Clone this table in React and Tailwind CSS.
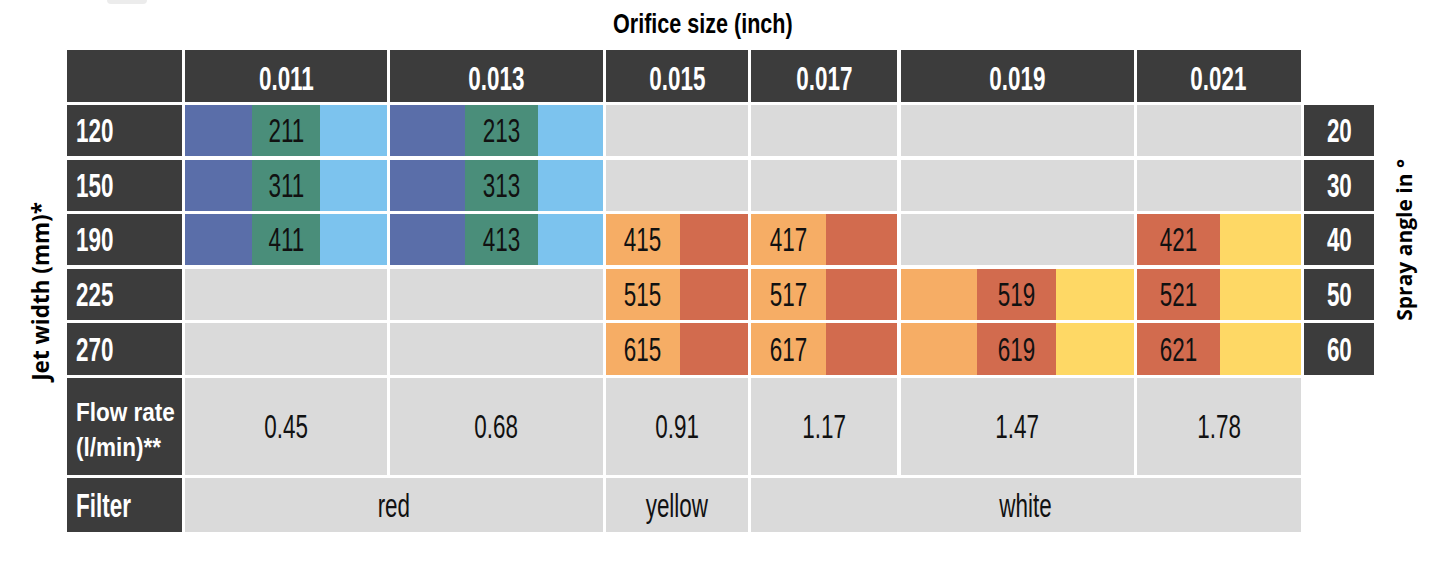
import React from 'react';

const dark = 'bg-[#3c3c3c]';
const gray = 'bg-[#dadada]';

// condensed look: Liberation Sans squeezed horizontally
const T = ({ children, left = false, className = '' }) => (
    <span className={`inline-block whitespace-nowrap scale-x-[0.68] ${left ? 'origin-left' : ''} ${className}`}>{children}</span>
);

const Seg = ({ color, w, children }) => (
    <div className={`${color} ${w || 'flex-1'} h-full flex items-center justify-center`}>
        {children && <T>{children}</T>}
    </div>
);

const Blank = () => <div className={`${gray} h-full`} />;

const BlueSet = ({ code, widths = ['flex-1', 'flex-1'] }) => (
    <div className="flex h-full">
        <Seg color="bg-[#5a6ea9]" w={widths[0]} />
        <Seg color="bg-[#4a8e7a]" w={widths[1]}>{code}</Seg>
        <Seg color="bg-[#7cc3ee]" />
    </div>
);

const OrangeRed = ({ code, w }) => (
    <div className="flex h-full">
        <Seg color="bg-[#f6ad65]" w={w}>{code}</Seg>
        <Seg color="bg-[#d26b4e]" />
    </div>
);

const OrangeRedYellow = ({ code }) => (
    <div className="flex h-full">
        <Seg color="bg-[#f6ad65]" w="w-[76px]" />
        <Seg color="bg-[#d26b4e]" w="w-[79px]">{code}</Seg>
        <Seg color="bg-[#fed865]" />
    </div>
);

const RedYellow = ({ code }) => (
    <div className="flex h-full">
        <Seg color="bg-[#d26b4e]" w="w-[83px]">{code}</Seg>
        <Seg color="bg-[#fed865]" />
    </div>
);

const RowHead = ({ children }) => (
    <div className={`${dark} h-full flex items-center pl-[9px] font-bold text-white`}>
        <T left>{children}</T>
    </div>
);

const Angle = ({ children }) => (
    <div className={`${dark} h-full flex items-center justify-center font-bold text-white`}>
        <T>{children}</T>
    </div>
);

const GrayCell = ({ children, className = '' }) => (
    <div className={`${gray} h-full flex items-center justify-center ${className}`}>
        <T>{children}</T>
    </div>
);

const sizes = ['0.011', '0.013', '0.015', '0.017', '0.019', '0.021'];
const c2w = ['w-[75px]', 'w-[73px]'];

const rows = [
    { width: '120', angle: '20', cells: [<BlueSet code="211" />, <BlueSet code="213" widths={c2w} />, <Blank />, <Blank />, <Blank />, <Blank />] },
    { width: '150', angle: '30', cells: [<BlueSet code="311" />, <BlueSet code="313" widths={c2w} />, <Blank />, <Blank />, <Blank />, <Blank />] },
    { width: '190', angle: '40', cells: [<BlueSet code="411" />, <BlueSet code="413" widths={c2w} />, <OrangeRed code="415" w="w-[74px]" />, <OrangeRed code="417" w="w-[75px]" />, <Blank />, <RedYellow code="421" />] },
    { width: '225', angle: '50', cells: [<Blank />, <Blank />, <OrangeRed code="515" w="w-[74px]" />, <OrangeRed code="517" w="w-[75px]" />, <OrangeRedYellow code="519" />, <RedYellow code="521" />] },
    { width: '270', angle: '60', cells: [<Blank />, <Blank />, <OrangeRed code="615" w="w-[74px]" />, <OrangeRed code="617" w="w-[75px]" />, <OrangeRedYellow code="619" />, <RedYellow code="621" />] },
];

const flow = ['0.45', '0.68', '0.91', '1.17', '1.47', '1.78'];

export default function App() {
    return (
        <div className="w-[1441px] h-[574px] bg-white overflow-hidden text-[#111] font-['Liberation_Sans',Arial,sans-serif] text-[33px] leading-none">
            {/* cut-off mark at the top edge */}
            <div className="h-[4px] flex">
                <div className="ml-[107px] w-[40px] h-[4px] rounded-b-full bg-[#ececec]" />
            </div>

            <div className="h-[46px] pt-[5.6px] pl-[613px]">
                <h1 className="text-[28px] leading-[28px] font-bold text-black">
                    <span className="inline-block whitespace-nowrap scale-x-[0.77] origin-left">Orifice size (inch)</span>
                </h1>
            </div>

            <div className="grid grid-cols-[63.7px_115px_201.4px_212.7px_141.7px_146.4px_233px_163.7px_70px_1fr] grid-rows-[51.7px_repeat(5,51.3px)_97.2px_53.5px] gap-[3.3px]">
                {/* left axis label */}
                <div className="col-start-1 row-start-1 row-span-8 flex items-center">
                    <span className="ml-[28.5px] [writing-mode:vertical-rl] rotate-180 font-['Open_Sans',sans-serif] font-bold text-[22.5px] leading-[24px] text-black whitespace-nowrap">
                        Jet width (mm)*
                    </span>
                </div>

                {/* right axis label */}
                <div className="col-start-10 row-start-2 row-span-5 flex items-center">
                    <span className="ml-[14.7px] [writing-mode:vertical-rl] rotate-180 font-['Open_Sans',sans-serif] font-bold text-[21px] leading-[24px] text-black whitespace-nowrap">
                        Spray angle in °
                    </span>
                </div>

                {/* header */}
                <div className={`${dark} h-full`} />
                {sizes.map((s) => (
                    <div key={s} className={`${dark} h-full flex items-center justify-center pt-[5px] font-bold text-white`}>
                        <T>{s}</T>
                    </div>
                ))}
                <div />
                <div />

                {rows.map((r) => (
                    <React.Fragment key={r.width}>
                        <RowHead>{r.width}</RowHead>
                        {r.cells.map((c, i) => (
                            <React.Fragment key={i}>{c}</React.Fragment>
                        ))}
                        <Angle>{r.angle}</Angle>
                    </React.Fragment>
                ))}

                {/* flow rate */}
                <div className={`${dark} h-full flex flex-col justify-center pl-[9px] pt-[6px] font-bold text-white text-[25px] leading-[35px]`}>
                    <span className="inline-block whitespace-nowrap scale-x-[0.9] origin-left">Flow rate</span>
                    <span className="inline-block whitespace-nowrap scale-x-[0.9] origin-left">(l/min)**</span>
                </div>
                {flow.map((f) => (
                    <GrayCell key={f}>{f}</GrayCell>
                ))}
                <div />
                <div />

                {/* filter */}
                <RowHead>Filter</RowHead>
                <GrayCell className="col-span-2">red</GrayCell>
                <GrayCell>yellow</GrayCell>
                <GrayCell className="col-span-3">white</GrayCell>
                <div />
                <div />
            </div>
        </div>
    );
}
